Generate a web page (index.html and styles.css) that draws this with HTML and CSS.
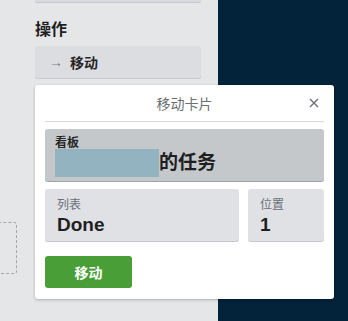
FILE: index.html
```html
<!DOCTYPE html>
<html lang="zh">
<head>
    <meta charset="UTF-8">
    <meta name="viewport" content="width=device-width, initial-scale=1.0">
    <title>移动卡片</title>
    <link rel="stylesheet" href="styles.css">
</head>
<body>
    <div class="page">
        <div class="sidebar">
            <div class="stub"></div>
            <h3 class="section-title">操作</h3>
            <button class="side-btn"><span class="arrow">→</span>移动</button>
            <div class="dashed"></div>
        </div>
        <div class="dark"></div>

        <div class="popover">
            <div class="pop-header">
                <span class="pop-title">移动卡片</span>
                <span class="pop-close">
                    <svg width="10" height="10" viewBox="0 0 10 10"><path d="M1 1L9 9M9 1L1 9" stroke="#6b6f73" stroke-width="1.4" fill="none"/></svg>
                </span>
            </div>
            <div class="pop-body">
                <div class="field field-board">
                    <div class="field-label dark-label">看板</div>
                    <div class="field-value"><span class="redact"></span>的任务</div>
                </div>
                <div class="field-row">
                    <div class="field field-list">
                        <div class="field-label">列表</div>
                        <div class="field-value">Done</div>
                    </div>
                    <div class="field field-pos">
                        <div class="field-label">位置</div>
                        <div class="field-value">1</div>
                    </div>
                </div>
                <button class="move-btn">移动</button>
            </div>
        </div>
    </div>
</body>
</html>
```
FILE: styles.css
```css
body {
    margin: 0;
    font-family: "Liberation Sans", "Noto Sans CJK SC", sans-serif;
    color: #172b4d;
}
.page {
    position: relative;
    display: flex;
    width: 348px;
    height: 321px;
    overflow: hidden;
}
.sidebar {
    position: relative;
    width: 183px;
    padding-left: 35px;
    background: #e4e6e8;
}
.dark {
    flex: 1;
    background: #03233b;
}
.stub {
    width: 166px;
    height: 2px;
    background: #d9dbde;
    border-radius: 0 0 3px 3px;
    box-shadow: 0 1px 0 #c4c7cb;
}
.section-title {
    margin: 17px 0 0;
    font-size: 16px;
    line-height: 22px;
    font-weight: bold;
    color: #1f1f1f;
}
.side-btn {
    display: flex;
    align-items: center;
    width: 166px;
    height: 32px;
    margin-top: 5px;
    padding: 0 0 0 14px;
    border: none;
    border-radius: 3px;
    background: #dbdde1;
    box-shadow: 0 1px 0 #c6c9cd;
    font-family: inherit;
    font-size: 14px;
    font-weight: bold;
    color: #262626;
}
.arrow {
    font-weight: normal;
    color: #7a7d80;
    margin-right: 7px;
    font-size: 14px;
}
.dashed {
    position: absolute;
    left: -30px;
    top: 222px;
    width: 45px;
    height: 50px;
    border: 1px dashed #a2a7ad;
    border-radius: 3px;
}
.popover {
    position: absolute;
    left: 35px;
    top: 85px;
    width: 299px;
    height: 214px;
    background: #fff;
    border-radius: 3px;
    box-shadow: 0 1px 3px rgba(0, 0, 0, 0.25);
}
.pop-header {
    position: relative;
    margin: 0 10px;
    height: 36px;
    border-bottom: 1px solid #d6d8db;
    text-align: center;
}
.pop-title {
    line-height: 36px;
    font-size: 14px;
    color: #6b6f73;
    font-family: "Noto Sans CJK SC", sans-serif;
}
.pop-close {
    position: absolute;
    right: 5px;
    top: 13px;
    width: 10px;
    height: 10px;
    display: flex;
}
.pop-body {
    padding: 7px 10px 0;
}
.field {
    height: 52px;
    box-sizing: border-box;
    padding: 8px 11px 0 12px;
    border-radius: 3px;
    background: #dfe1e5;
    box-shadow: 0 1px 0 #c5c8cc;
}
.field-board {
    background: #c4c8cb;
    box-shadow: 0 1px 0 #9ea3a7;
    padding: 6px 10px 0;
}
.field-label {
    font-size: 12px;
    line-height: 14px;
    color: #6b7075;
    font-family: "Noto Sans CJK SC", sans-serif;
}
.dark-label {
    color: #262626;
    font-weight: bold;
}
.field-value {
    display: flex;
    align-items: center;
    font-size: 19px;
    line-height: 28px;
    font-weight: bold;
    color: #1f1f1f;
}
.redact {
    display: inline-block;
    width: 104px;
    height: 28px;
    background: #94b3c1;
}
.field-row {
    display: flex;
    gap: 9px;
    margin-top: 8px;
}
.field-list {
    width: 194px;
}
.field-pos {
    flex: 1;
}
.move-btn {
    display: block;
    width: 87px;
    height: 32px;
    margin-top: 15px;
    border: none;
    border-radius: 3px;
    background: #4a9e37;
    color: #fff;
    font-family: "Noto Sans CJK SC", sans-serif;
    font-size: 14px;
    font-weight: bold;
}
```
